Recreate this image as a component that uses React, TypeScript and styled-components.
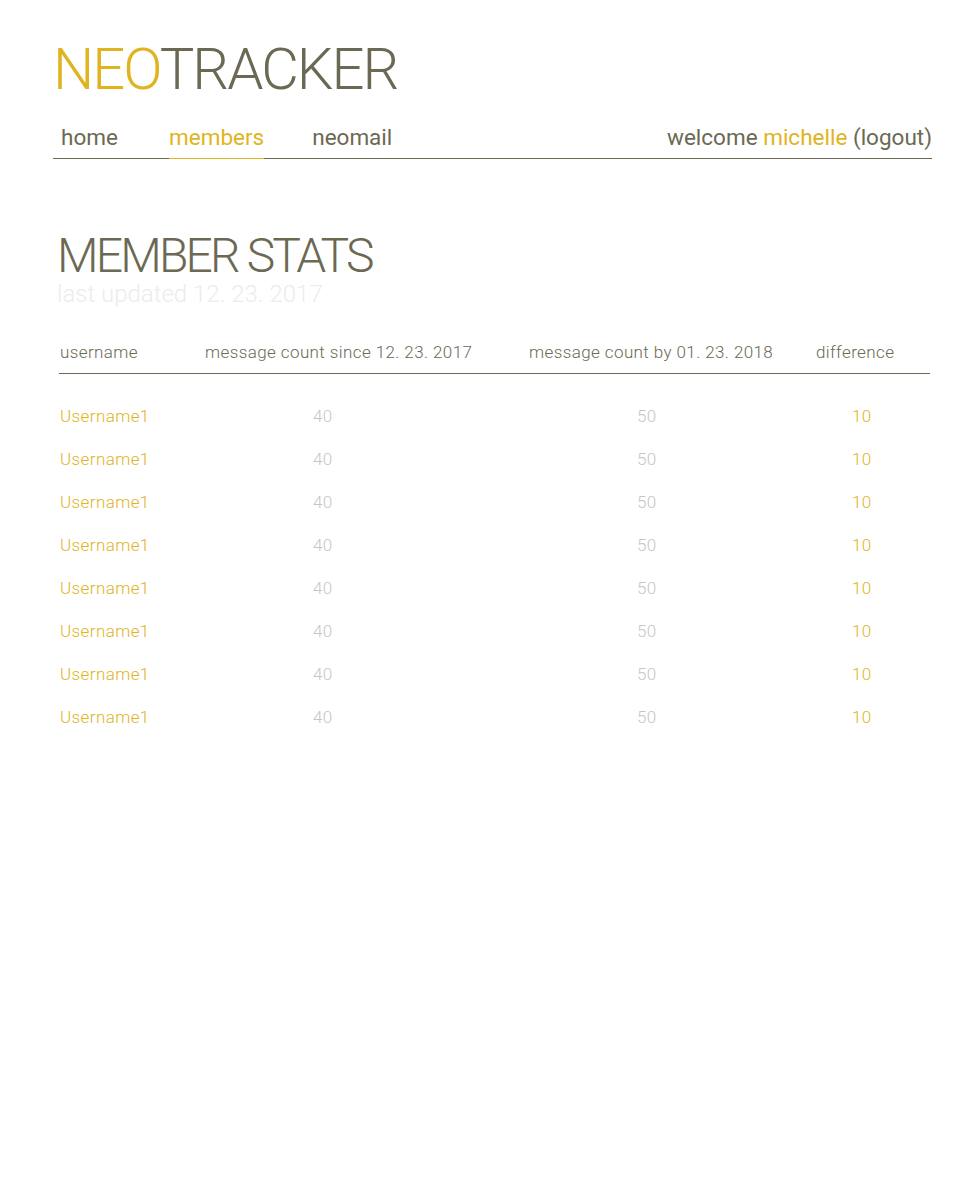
import React from 'react';
import styled, { createGlobalStyle } from 'styled-components';

const olive = '#6b6954';
const gold = '#e0b41e';

const GlobalStyle = createGlobalStyle`
  body {
    margin: 0;
    background: #ffffff;
    font-family: Roboto, "Liberation Sans", sans-serif;
    color: ${olive};
  }
`;

const Page = styled.div`
  width: 879px;
  padding: 40px 0 0 53px;
`;

const Logo = styled.h1`
  margin: 0;
  font-size: 58px;
  line-height: 1;
  font-weight: 300;
  letter-spacing: -2px;
  color: ${olive};
`;

const LogoAccent = styled.span`
  color: ${gold};
`;

const NavBar = styled.nav`
  display: flex;
  align-items: flex-end;
  margin-top: 26px;
  border-bottom: 1px solid ${olive};
`;

const Tabs = styled.div`
  display: flex;
  flex: 1;
`;

const Tab = styled.a<{ $active?: boolean; $width?: number; $gap?: number }>`
  display: block;
  width: ${({ $width }) => ($width ? `${$width}px` : 'auto')};
  margin-left: ${({ $gap }) => $gap ?? 0}px;
  padding: 0 0 8px ${({ $width }) => ($width ? 8 : 0)}px;
  box-sizing: border-box;
  font-size: 22.5px;
  line-height: 26px;
  color: ${({ $active }) => ($active ? gold : olive)};
  border-bottom: 1px solid ${({ $active }) => ($active ? gold : 'transparent')};
  margin-bottom: -1px;
  text-decoration: none;
  cursor: pointer;
`;

const Welcome = styled.div`
  font-size: 22.5px;
  line-height: 26px;
  padding-bottom: 8px;
`;

const UserName = styled.span`
  color: ${gold};
`;

const Section = styled.section`
  margin-top: 72px;
  padding-left: 6px;
`;

const Title = styled.h2`
  margin: 0 0 2px -2px;
  padding-top: 3px;
  font-size: 48px;
  line-height: 44px;
  font-weight: 300;
  letter-spacing: -2.8px;
  color: ${olive};
`;

const Updated = styled.div`
  margin-left: -2px;
  font-size: 24px;
  line-height: 28px;
  font-weight: 300;
  color: #ececec;
`;

const Table = styled.div`
  margin-top: 34px;
  width: 871px;
  display: grid;
  grid-template-columns: 145px 324px 287px 115px;
  font-size: 17px;
  font-weight: 300;
  letter-spacing: 0.4px;
`;

const HeadCell = styled.div`
  line-height: 20px;
  color: ${olive};
  padding: 0 0 11px 1px;
  border-bottom: 1px solid ${olive};
  margin-bottom: 21px;
  white-space: nowrap;
`;

const Cell = styled.div<{ $indent: number; $accent?: boolean }>`
  line-height: 43px;
  padding-left: ${({ $indent }) => $indent}px;
  color: ${({ $accent }) => ($accent ? gold : '#c6c6c6')};
`;

const rows = Array.from({ length: 8 }, () => ({
  user: 'Username1',
  since: 40,
  by: 50,
  diff: 10,
}));

export default function App() {
  return (
    <>
      <GlobalStyle />
      <Page>
        <Logo>
          <LogoAccent>NEO</LogoAccent>TRACKER
        </Logo>
        <NavBar>
          <Tabs>
            <Tab $width={116}>home</Tab>
            <Tab $active>members</Tab>
            <Tab $gap={48}>neomail</Tab>
          </Tabs>
          <Welcome>
            welcome <UserName>michelle</UserName> (logout)
          </Welcome>
        </NavBar>

        <Section>
          <Title>MEMBER STATS</Title>
          <Updated>last updated 12. 23. 2017</Updated>

          <Table>
            <HeadCell>username</HeadCell>
            <HeadCell>message count since 12. 23. 2017</HeadCell>
            <HeadCell>message count by 01. 23. 2018</HeadCell>
            <HeadCell>difference</HeadCell>
            {rows.map((r, i) => (
              <React.Fragment key={i}>
                <Cell $indent={1} $accent>{r.user}</Cell>
                <Cell $indent={109}>{r.since}</Cell>
                <Cell $indent={109}>{r.by}</Cell>
                <Cell $indent={37} $accent>{r.diff}</Cell>
              </React.Fragment>
            ))}
          </Table>
        </Section>
      </Page>
    </>
  );
}
